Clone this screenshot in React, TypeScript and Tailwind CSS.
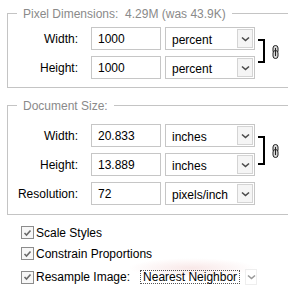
import React from "react";

const font = { fontFamily: '"Liberation Sans", Arial, sans-serif' };

function Chevron() {
  return (
    <svg width="9" height="6" viewBox="0 0 9 6">
      <path d="M1 1.5 L4.5 4.5 L8 1.5" fill="none" stroke="#4a4a4a" strokeWidth="1.6" />
    </svg>
  );
}

function Select({ value }: { value: string }) {
  return (
    <div className="flex items-center h-[23px] w-[90px] border border-[#c6c6c6] bg-white">
      <span className="flex-1 pl-[6px] text-[12px] text-black leading-none pt-[2px]">{value}</span>
      <div className="flex items-center justify-center w-[16px] h-[19px] mr-[1px] border border-[#d4d4d4] bg-[#f5f5f5]">
        <Chevron />
      </div>
    </div>
  );
}

function Input({ value }: { value: string }) {
  return (
    <div className="flex items-center h-[23px] w-[70px] border border-[#c6c6c6] bg-white pl-[6px] text-[12px] text-black">
      {value}
    </div>
  );
}

function Row({ label, value, unit }: { label: string; value: string; unit: string }) {
  return (
    <div className="flex items-center h-[23px]">
      <div className="w-[70px] text-right text-[12px] text-black">{label}</div>
      <div className="ml-[13px]">
        <Input value={value} />
      </div>
      <div className="ml-[4px]">
        <Select value={unit} />
      </div>
    </div>
  );
}

function Chain() {
  return (
    <svg width="7" height="14" viewBox="0 0 7 14">
      <rect x="1" y="0.5" width="5" height="8" rx="2.5" fill="#d8d8d8" stroke="#222" strokeWidth="1" />
      <rect x="1" y="5.5" width="5" height="8" rx="2.5" fill="#d8d8d8" stroke="#222" strokeWidth="1" />
      <line x1="3.5" y1="3" x2="3.5" y2="11" stroke="#222" strokeWidth="1" />
    </svg>
  );
}

function Bracket({ tall }: { tall?: boolean }) {
  return (
    <div className={tall ? "flex items-center" : "flex items-center mb-[4px]"}>
      <div
        className={
          tall
            ? "w-[7px] h-[29px] border-t-2 border-r-2 border-b-2 border-black"
            : "w-[7px] h-[24px] border-t-2 border-r-2 border-b-2 border-black"
        }
      />
      <div className="ml-[7px] mt-[1px]">
        <Chain />
      </div>
    </div>
  );
}

function GroupHeader({ children }: { children: React.ReactNode }) {
  return (
    <div className="flex items-center h-[13px]">
      <div className="w-[10px] h-px bg-[#c4c4c4]" />
      <span className="px-[6px] text-[12px] text-[#8a8a8a] whitespace-nowrap leading-none">{children}</span>
      <div className="flex-1 h-px bg-[#c4c4c4]" />
    </div>
  );
}

function Check({ label, rowClass }: { label: string; rowClass: string }) {
  return (
    <div className={rowClass}>
      <div className="flex items-center justify-center w-[13px] h-[13px] border border-[#8c8c8c] bg-[#f7f7f7]">
        <svg width="9" height="8" viewBox="0 0 9 8">
          <path d="M1.5 4 L3.5 6 L7.5 1.5" fill="none" stroke="#6a6a6a" strokeWidth="1.6" />
        </svg>
      </div>
      <span className="ml-[2px] text-[12px] text-black whitespace-nowrap">{label}</span>
    </div>
  );
}

export default function App() {
  return (
    <div className="w-[288px] h-[296px] overflow-hidden bg-white" style={font}>
      {/* Pixel Dimensions */}
      <div className="ml-[7px] mt-[7px] w-[300px]">
        <GroupHeader>Pixel Dimensions:&nbsp;&nbsp;4.29M (was 43.9K)</GroupHeader>
        <div className="-mt-[7px] h-[75px] border-l border-b border-[#c4c4c4] pt-[14px]">
          <div className="flex items-center">
            <div className="flex flex-col gap-[6px]">
              <Row label="Width:" value="1000" unit="percent" />
              <Row label="Height:" value="1000" unit="percent" />
            </div>
            <div className="ml-[3px]">
              <Bracket />
            </div>
          </div>
        </div>
      </div>

      {/* Document Size */}
      <div className="ml-[7px] mt-[11px] w-[300px]">
        <GroupHeader>Document Size:</GroupHeader>
        <div className="-mt-[7px] h-[110px] border-l border-b border-[#c4c4c4] pt-[19px]">
          <div className="flex items-center">
            <div className="flex flex-col gap-[6px]">
              <Row label="Width:" value="20.833" unit="inches" />
              <Row label="Height:" value="13.889" unit="inches" />
            </div>
            <div className="ml-[3px]">
              <Bracket tall />
            </div>
          </div>
          <div className="mt-[6px]">
            <Row label="Resolution:" value="72" unit="pixels/inch" />
          </div>
        </div>
      </div>

      {/* Checkboxes */}
      <div className="ml-[21px] mt-[7px] flex flex-col">
        <Check label="Scale Styles" rowClass="flex items-center h-[21px]" />
        <Check label="Constrain Proportions" rowClass="flex items-center h-[21px]" />
        <div className="flex items-center h-[26px]">
          <Check label="Resample Image:" rowClass="flex items-center h-[22px]" />
          <div className="ml-[10px] relative flex items-center">
            <div className="absolute -left-[12px] -top-[11px] w-[128px] h-[20px] rounded-full bg-[radial-gradient(ellipse_at_center,rgba(215,110,110,0.16),rgba(255,255,255,0)_70%)]" />
            <div className="relative h-[14px] px-[2px] flex items-center border border-dotted border-[#555] text-[12px] text-black whitespace-nowrap">
              Nearest Neighbor
            </div>
            <div className="relative ml-[5px] flex items-center justify-center w-[12px] h-[16px] border border-[#eeeeee]">
              <svg width="9" height="6" viewBox="0 0 9 6">
                <path d="M1 1.5 L4.5 4.5 L8 1.5" fill="none" stroke="#9a9a9a" strokeWidth="1.6" />
              </svg>
            </div>
          </div>
        </div>
      </div>
    </div>
  );
}
